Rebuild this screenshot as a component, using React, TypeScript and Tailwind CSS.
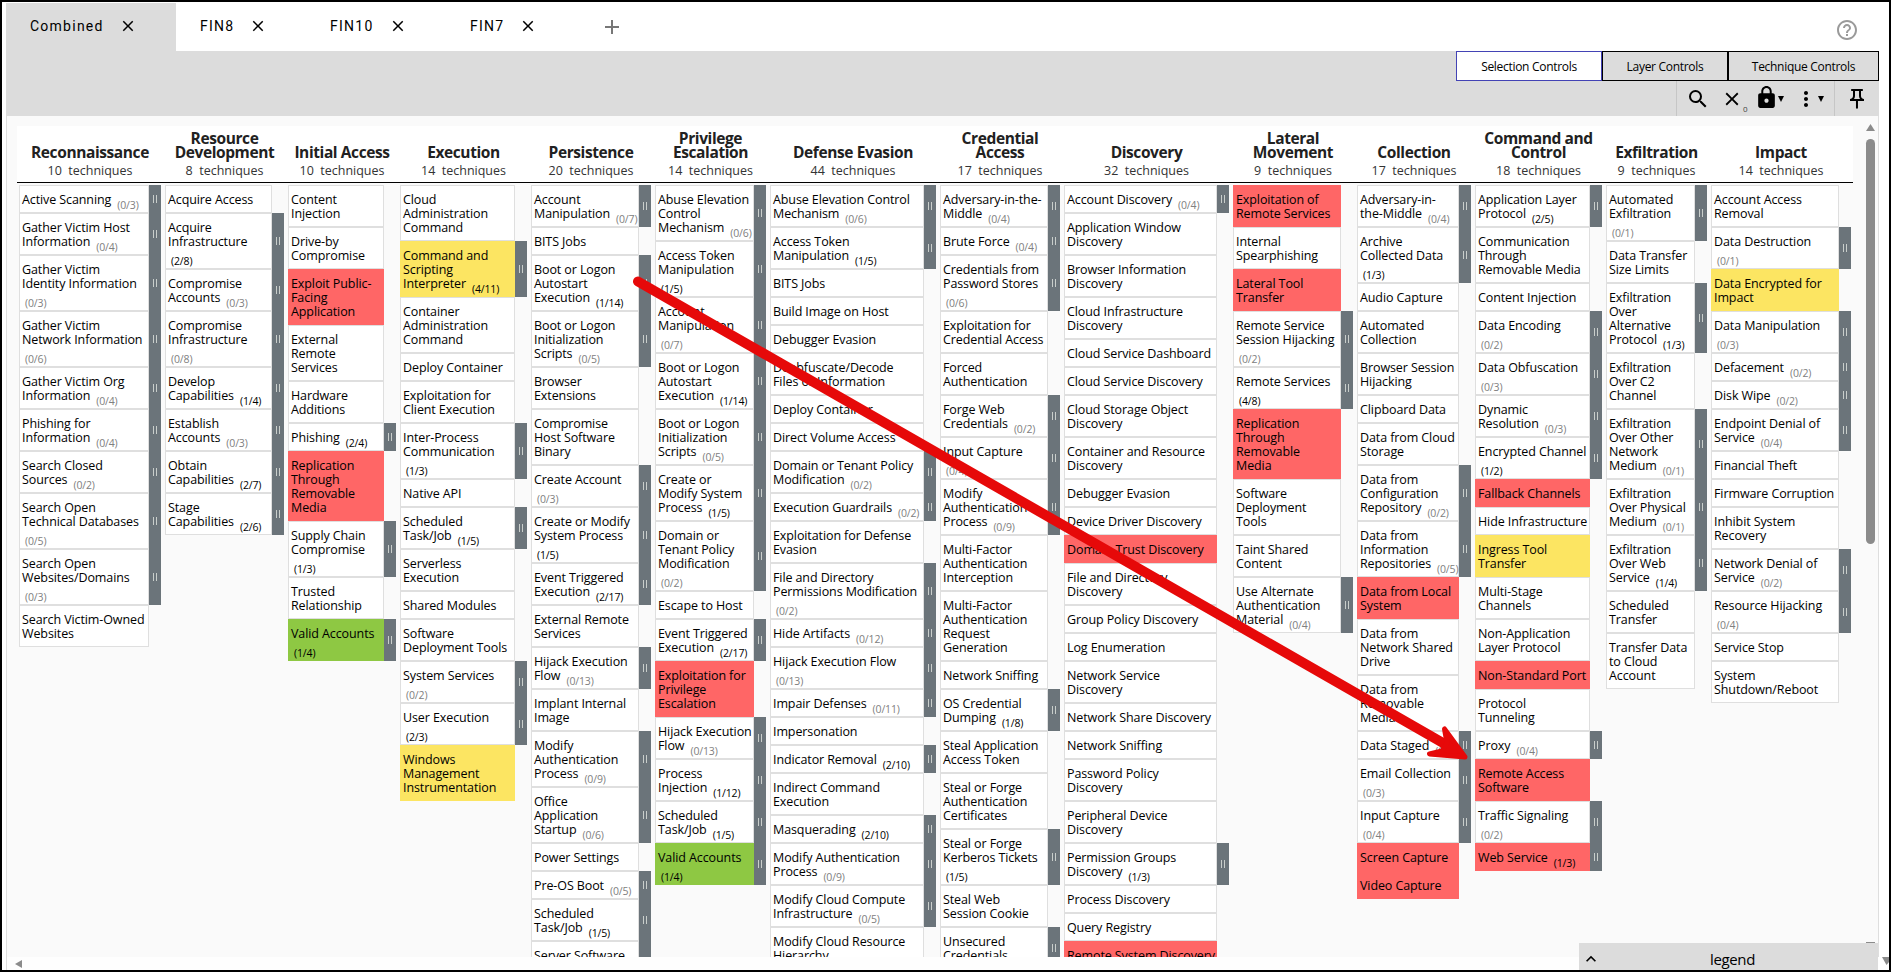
import React from "react";
import {
  MdAdd,
  MdClose,
  MdExpandLess,
  MdHelpOutline,
  MdLock,
  MdMoreVert,
  MdOutlinePushPin,
  MdSearch,
} from "react-icons/md";

type Tactic = {
  title: string[];
  count: number;
  width: string;
  // "|" breaks a line, "#" starts the sub-technique count, a leading "R:", "Y:" or "G:" is the score colour.
  rows: string[];
};

const tactics: Tactic[] = [
  {
    title: ["Reconnaissance"],
    count: 10,
    width: "w-[130px]",
    rows: [
      "Active Scanning#0/3",
      "Gather Victim Host|Information#0/4",
      "Gather Victim|Identity Information|#0/3",
      "Gather Victim|Network Information|#0/6",
      "Gather Victim Org|Information#0/4",
      "Phishing for|Information#0/4",
      "Search Closed|Sources#0/2",
      "Search Open|Technical Databases|#0/5",
      "Search Open|Websites/Domains|#0/3",
      "Search Victim-Owned|Websites",
    ],
  },
  {
    title: ["Resource", "Development"],
    count: 8,
    width: "w-[107px]",
    rows: [
      "Acquire Access",
      "Acquire|Infrastructure|#2/8",
      "Compromise|Accounts#0/3",
      "Compromise|Infrastructure|#0/8",
      "Develop|Capabilities#1/4",
      "Establish|Accounts#0/3",
      "Obtain|Capabilities#2/7",
      "Stage|Capabilities#2/6",
    ],
  },
  {
    title: ["Initial Access"],
    count: 10,
    width: "w-[96px]",
    rows: [
      "Content|Injection",
      "Drive-by|Compromise",
      "R:Exploit Public-|Facing|Application",
      "External|Remote|Services",
      "Hardware|Additions",
      "Phishing#2/4",
      "R:Replication|Through|Removable|Media",
      "Supply Chain|Compromise|#1/3",
      "Trusted|Relationship",
      "G:Valid Accounts|#1/4",
    ],
  },
  {
    title: ["Execution"],
    count: 14,
    width: "w-[115px]",
    rows: [
      "Cloud|Administration|Command",
      "Y:Command and|Scripting|Interpreter#4/11",
      "Container|Administration|Command",
      "Deploy Container",
      "Exploitation for|Client Execution",
      "Inter-Process|Communication|#1/3",
      "Native API",
      "Scheduled|Task/Job#1/5",
      "Serverless|Execution",
      "Shared Modules",
      "Software|Deployment Tools",
      "System Services|#0/2",
      "User Execution|#2/3",
      "Y:Windows|Management|Instrumentation",
    ],
  },
  {
    title: ["Persistence"],
    count: 20,
    width: "w-[108px]",
    rows: [
      "Account|Manipulation#0/7",
      "BITS Jobs",
      "Boot or Logon|Autostart|Execution#1/14",
      "Boot or Logon|Initialization|Scripts#0/5",
      "Browser|Extensions",
      "Compromise|Host Software|Binary",
      "Create Account|#0/3",
      "Create or Modify|System Process|#1/5",
      "Event Triggered|Execution#2/17",
      "External Remote|Services",
      "Hijack Execution|Flow#0/13",
      "Implant Internal|Image",
      "Modify|Authentication|Process#0/9",
      "Office|Application|Startup#0/6",
      "Power Settings",
      "Pre-OS Boot#0/5",
      "Scheduled|Task/Job#1/5",
      "Server Software|Component#0/5",
    ],
  },
  {
    title: ["Privilege", "Escalation"],
    count: 14,
    width: "w-[99px]",
    rows: [
      "Abuse Elevation|Control|Mechanism#0/6",
      "Access Token|Manipulation|#1/5",
      "Account|Manipulation|#0/7",
      "Boot or Logon|Autostart|Execution#1/14",
      "Boot or Logon|Initialization|Scripts#0/5",
      "Create or|Modify System|Process#1/5",
      "Domain or|Tenant Policy|Modification|#0/2",
      "Escape to Host",
      "Event Triggered|Execution#2/17",
      "R:Exploitation for|Privilege|Escalation",
      "Hijack Execution|Flow#0/13",
      "Process|Injection#1/12",
      "Scheduled|Task/Job#1/5",
      "G:Valid Accounts|#1/4",
    ],
  },
  {
    title: ["Defense Evasion"],
    count: 44,
    width: "w-[154px]",
    rows: [
      "Abuse Elevation Control|Mechanism#0/6",
      "Access Token|Manipulation#1/5",
      "BITS Jobs",
      "Build Image on Host",
      "Debugger Evasion",
      "Deobfuscate/Decode|Files or Information",
      "Deploy Container",
      "Direct Volume Access",
      "Domain or Tenant Policy|Modification#0/2",
      "Execution Guardrails#0/2",
      "Exploitation for Defense|Evasion",
      "File and Directory|Permissions Modification|#0/2",
      "Hide Artifacts#0/12",
      "Hijack Execution Flow|#0/13",
      "Impair Defenses#0/11",
      "Impersonation",
      "Indicator Removal#2/10",
      "Indirect Command|Execution",
      "Masquerading#2/10",
      "Modify Authentication|Process#0/9",
      "Modify Cloud Compute|Infrastructure#0/5",
      "Modify Cloud Resource|Hierarchy",
    ],
  },
  {
    title: ["Credential", "Access"],
    count: 17,
    width: "w-[108px]",
    rows: [
      "Adversary-in-the-|Middle#0/4",
      "Brute Force#0/4",
      "Credentials from|Password Stores|#0/6",
      "Exploitation for|Credential Access",
      "Forced|Authentication",
      "Forge Web|Credentials#0/2",
      "Input Capture|#0/4",
      "Modify|Authentication|Process#0/9",
      "Multi-Factor|Authentication|Interception",
      "Multi-Factor|Authentication|Request|Generation",
      "Network Sniffing",
      "OS Credential|Dumping#1/8",
      "Steal Application|Access Token",
      "Steal or Forge|Authentication|Certificates",
      "Steal or Forge|Kerberos Tickets|#1/5",
      "Steal Web|Session Cookie",
      "Unsecured|Credentials#2/8",
    ],
  },
  {
    title: ["Discovery"],
    count: 32,
    width: "w-[153px]",
    rows: [
      "Account Discovery#0/4",
      "Application Window|Discovery",
      "Browser Information|Discovery",
      "Cloud Infrastructure|Discovery",
      "Cloud Service Dashboard",
      "Cloud Service Discovery",
      "Cloud Storage Object|Discovery",
      "Container and Resource|Discovery",
      "Debugger Evasion",
      "Device Driver Discovery",
      "R:Domain Trust Discovery",
      "File and Directory|Discovery",
      "Group Policy Discovery",
      "Log Enumeration",
      "Network Service|Discovery",
      "Network Share Discovery",
      "Network Sniffing",
      "Password Policy|Discovery",
      "Peripheral Device|Discovery",
      "Permission Groups|Discovery#1/3",
      "Process Discovery",
      "Query Registry",
      "R:Remote System Discovery",
    ],
  },
  {
    title: ["Lateral", "Movement"],
    count: 9,
    width: "w-[108px]",
    rows: [
      "R:Exploitation of|Remote Services",
      "Internal|Spearphishing",
      "R:Lateral Tool|Transfer",
      "Remote Service|Session Hijacking|#0/2",
      "Remote Services|#4/8",
      "R:Replication|Through|Removable|Media",
      "Software|Deployment|Tools",
      "Taint Shared|Content",
      "Use Alternate|Authentication|Material#0/4",
    ],
  },
  {
    title: ["Collection"],
    count: 17,
    width: "w-[102px]",
    rows: [
      "Adversary-in-|the-Middle#0/4",
      "Archive|Collected Data|#1/3",
      "Audio Capture",
      "Automated|Collection",
      "Browser Session|Hijacking",
      "Clipboard Data",
      "Data from Cloud|Storage",
      "Data from|Configuration|Repository#0/2",
      "Data from|Information|Repositories#0/5",
      "R:Data from Local|System",
      "Data from|Network Shared|Drive",
      "Data from|Removable|Media",
      "Data Staged#0/2",
      "Email Collection|#0/3",
      "Input Capture|#0/4",
      "R:Screen Capture",
      "R:Video Capture",
    ],
  },
  {
    title: ["Command and", "Control"],
    count: 18,
    width: "w-[115px]",
    rows: [
      "Application Layer|Protocol#2/5",
      "Communication|Through|Removable Media",
      "Content Injection",
      "Data Encoding|#0/2",
      "Data Obfuscation|#0/3",
      "Dynamic|Resolution#0/3",
      "Encrypted Channel|#1/2",
      "R:Fallback Channels",
      "Hide Infrastructure",
      "Y:Ingress Tool|Transfer",
      "Multi-Stage|Channels",
      "Non-Application|Layer Protocol",
      "R:Non-Standard Port",
      "Protocol|Tunneling",
      "Proxy#0/4",
      "R:Remote Access|Software",
      "Traffic Signaling|#0/2",
      "R:Web Service#1/3",
    ],
  },
  {
    title: ["Exfiltration"],
    count: 9,
    width: "w-[89px]",
    rows: [
      "Automated|Exfiltration|#0/1",
      "Data Transfer|Size Limits",
      "Exfiltration|Over|Alternative|Protocol#1/3",
      "Exfiltration|Over C2|Channel",
      "Exfiltration|Over Other|Network|Medium#0/1",
      "Exfiltration|Over Physical|Medium#0/1",
      "Exfiltration|Over Web|Service#1/4",
      "Scheduled|Transfer",
      "Transfer Data|to Cloud|Account",
    ],
  },
  {
    title: ["Impact"],
    count: 14,
    width: "w-[128px]",
    rows: [
      "Account Access|Removal",
      "Data Destruction|#0/1",
      "Y:Data Encrypted for|Impact",
      "Data Manipulation|#0/3",
      "Defacement#0/2",
      "Disk Wipe#0/2",
      "Endpoint Denial of|Service#0/4",
      "Financial Theft",
      "Firmware Corruption",
      "Inhibit System|Recovery",
      "Network Denial of|Service#0/2",
      "Resource Hijacking|#0/4",
      "Service Stop",
      "System|Shutdown/Reboot",
    ],
  },
];

const scoreStyles: Record<string, string> = {
  R: "bg-[#ff6666] border-[#ff6666]",
  Y: "bg-[#fce562] border-[#fce562]",
  G: "bg-[#8ec843] border-[#8ec843]",
};

function Technique({ row }: { row: string }) {
  const scored = row[1] === ":";
  const tone = scored ? scoreStyles[row[0]] : "bg-white border-[#dfdfdf]";
  const body = scored ? row.slice(2) : row;
  const lines = body.split("|");
  const hasSubs = body.includes("#");
  return (
    <div className="flex shrink-0">
      <div className={`min-w-0 grow border pt-[7px] pb-[5px] pl-0.5 ${tone}`}>
        {lines.map((line) => {
          const [name, subs] = line.split("#");
          const muted = subs?.startsWith("0") && !scored;
          return (
            <div key={line} className="h-3.5 whitespace-nowrap text-[12.5px] leading-[14px] tracking-[-0.1px]">
              {name}
              {subs && (
                <span
                  className={`inline-block align-[-5px] text-[10.5px] leading-none tracking-[-0.15px] ${name ? "ml-1.5" : "ml-[3px]"} ${muted ? "text-[#808080]" : "text-black"}`}
                >
                  ({subs})
                </span>
              )}
            </div>
          );
        })}
      </div>
      <div className={`flex w-3 shrink-0 items-center justify-center gap-0.5 ${hasSubs ? "bg-[#6b747a]" : ""}`}>
        {hasSubs && (
          <>
            <span className="h-2 w-px bg-[#c9cecb]" />
            <span className="h-2 w-px bg-[#c9cecb]" />
          </>
        )}
      </div>
    </div>
  );
}

function Tab({ label, className }: { label: string; className: string }) {
  return (
    <div className={`flex h-full items-center gap-[15px] pb-[3px] pl-6 ${className}`}>
      <span>{label}</span>
      <MdClose className="size-[18px]" />
    </div>
  );
}

function Caret({ className }: { className: string }) {
  return (
    <svg className={`h-[6px] w-[6px] ${className}`} viewBox="0 0 6 6">
      <path d="M0 0h6L3 6z" />
    </svg>
  );
}

export default function App() {
  return (
    <div className="relative flex h-[972px] w-[1891px] flex-col overflow-hidden border-2 border-black bg-white pt-px font-['Open_Sans','Noto_Sans',sans-serif] text-black">
      <div className="flex h-12 shrink-0 items-center pl-1 font-['Roboto',sans-serif] text-sm tracking-[1.25px]">
        <Tab label="Combined" className="w-[170px] bg-[#dcdcdc]" />
        <Tab label="FIN8" className="w-[130px]" />
        <Tab label="FIN10" className="w-[140px]" />
        <Tab label="FIN7" className="w-[130px]" />
        <MdAdd className="ml-[24px] size-6 text-[#777]" />
        <MdHelpOutline className="mr-[30px] ml-auto size-6 translate-y-[3px] text-[#9a9a9a]" />
      </div>

      <div className="ml-1 flex h-[65px] w-[1873px] shrink-0 flex-col items-end bg-[#dcdcdc]">
        <div className="flex h-[30px] text-[12px] tracking-[-0.3px] *:pt-0.5">
          <div className="flex w-[146px] items-center justify-center border border-[#4343b5] bg-white">Selection Controls</div>
          <div className="flex w-[126px] items-center justify-center border border-black">Layer Controls</div>
          <div className="flex w-[151px] items-center justify-center border border-black">Technique Controls</div>
        </div>
        <div className="flex h-[35px] items-center">
          <div className="flex h-full w-[158px] items-center border-l border-[#c6c6c6] pl-[9px]">
            <MdSearch className="size-6" />
            <MdClose className="ml-[11px] size-[22px]" />
            <span className="mt-5 text-[8px] text-[#444]">0</span>
            <MdLock className="ml-[6px] size-[25px] -translate-y-px" />
            <Caret className="-ml-px" />
            <MdMoreVert className="ml-[10px] size-6" />
            <Caret className="" />
          </div>
          <div className="flex h-full w-[45px] items-center border-l border-[#c6c6c6] pl-[10px]">
            <MdOutlinePushPin className="size-6" />
          </div>
        </div>
      </div>

      <div className="ml-1 flex min-h-0 w-[1873px] grow border-x border-[#dedede] bg-[#fafafa]">
        <div className="ml-[10px] flex w-[1836px] shrink-0 flex-col pt-2.5">
          <div className="flex h-[57px] shrink-0 items-end gap-1 border-b border-black bg-white pb-1 pl-0.5">
            {tactics.map((t) => (
              <div key={t.title[0]} className={`box-content flex shrink-0 justify-center pr-3 ${t.width}`}>
                <div className="-mr-3 grow text-center whitespace-nowrap">
                  <div className="text-[15.5px] leading-[14px] font-bold tracking-[-0.4px] text-[#212121]">
                    {t.title.map((l) => (
                      <div key={l}>{l}</div>
                    ))}
                  </div>
                  <div className="mt-[5px] text-[12.5px] leading-[14px] whitespace-pre text-[#333]">{`${t.count}  techniques`}</div>
                </div>
              </div>
            ))}
          </div>
          <div className="mt-0.5 flex h-[772px] shrink-0 items-start gap-1 overflow-hidden pl-0.5">
            {tactics.map((t) => (
              <div key={t.title[0]} className={`box-content flex shrink-0 flex-col pr-3 ${t.width}`}>
                <div className="-mr-3 flex flex-col">
                  {t.rows.map((r) => (
                    <Technique key={r} row={r} />
                  ))}
                </div>
              </div>
            ))}
          </div>
        </div>
        <div className="ml-[13px] flex w-[9px] flex-col items-center pt-2">
          <svg className="h-[7px] w-[9px] shrink-0" viewBox="0 0 9 7">
            <path d="M4.5 0 9 7H0z" fill="#8b8b8b" />
          </svg>
          <div className="mt-2 h-[405px] w-full shrink-0 rounded-full bg-[#8b8b8b]" />
          <div className="mt-[398px] h-px w-full shrink-0 bg-[#8b8b8b]" />
        </div>
      </div>

      <div className="absolute bottom-0 left-1 h-[13px] w-[1873px] border-l border-[#dedede] bg-[#fefefe]">
        <svg className="mt-[3px] ml-2 h-2 w-[7px]" viewBox="0 0 7 8">
          <path d="M7 0v8L0 4z" fill="#8b8b8b" />
        </svg>
      </div>

      <div className="absolute right-[11px] bottom-0 flex h-[27px] w-[299px] items-center bg-[#dcdcdc] text-[15px]">
        <MdExpandLess className="ml-0.5 size-5 shrink-0 translate-y-0.5" />
        <span className="grow pt-[5px] pr-3.5 text-center leading-none tracking-[-0.35px]">legend</span>
      </div>
      <svg className="absolute right-0 bottom-[5px] h-2 w-[7px]" viewBox="0 0 7 8">
        <path d="M0 0h7v5L4.5 8z" fill="#8b8b8b" />
      </svg>

      <svg className="pointer-events-none absolute -top-0.5 -left-0.5 h-[972px] w-[1891px]" viewBox="0 0 1891 972">
        <path d="M638 281.500L1450 747" stroke="#e60909" strokeWidth="10" strokeLinecap="round" />
        <path
          d="M1465 757L1444.500 729 1447 743 1442 751 1429.500 754z"
          fill="#e60909"
          stroke="#e60909"
          strokeWidth="5"
          strokeLinejoin="round"
        />
      </svg>
    </div>
  );
}
